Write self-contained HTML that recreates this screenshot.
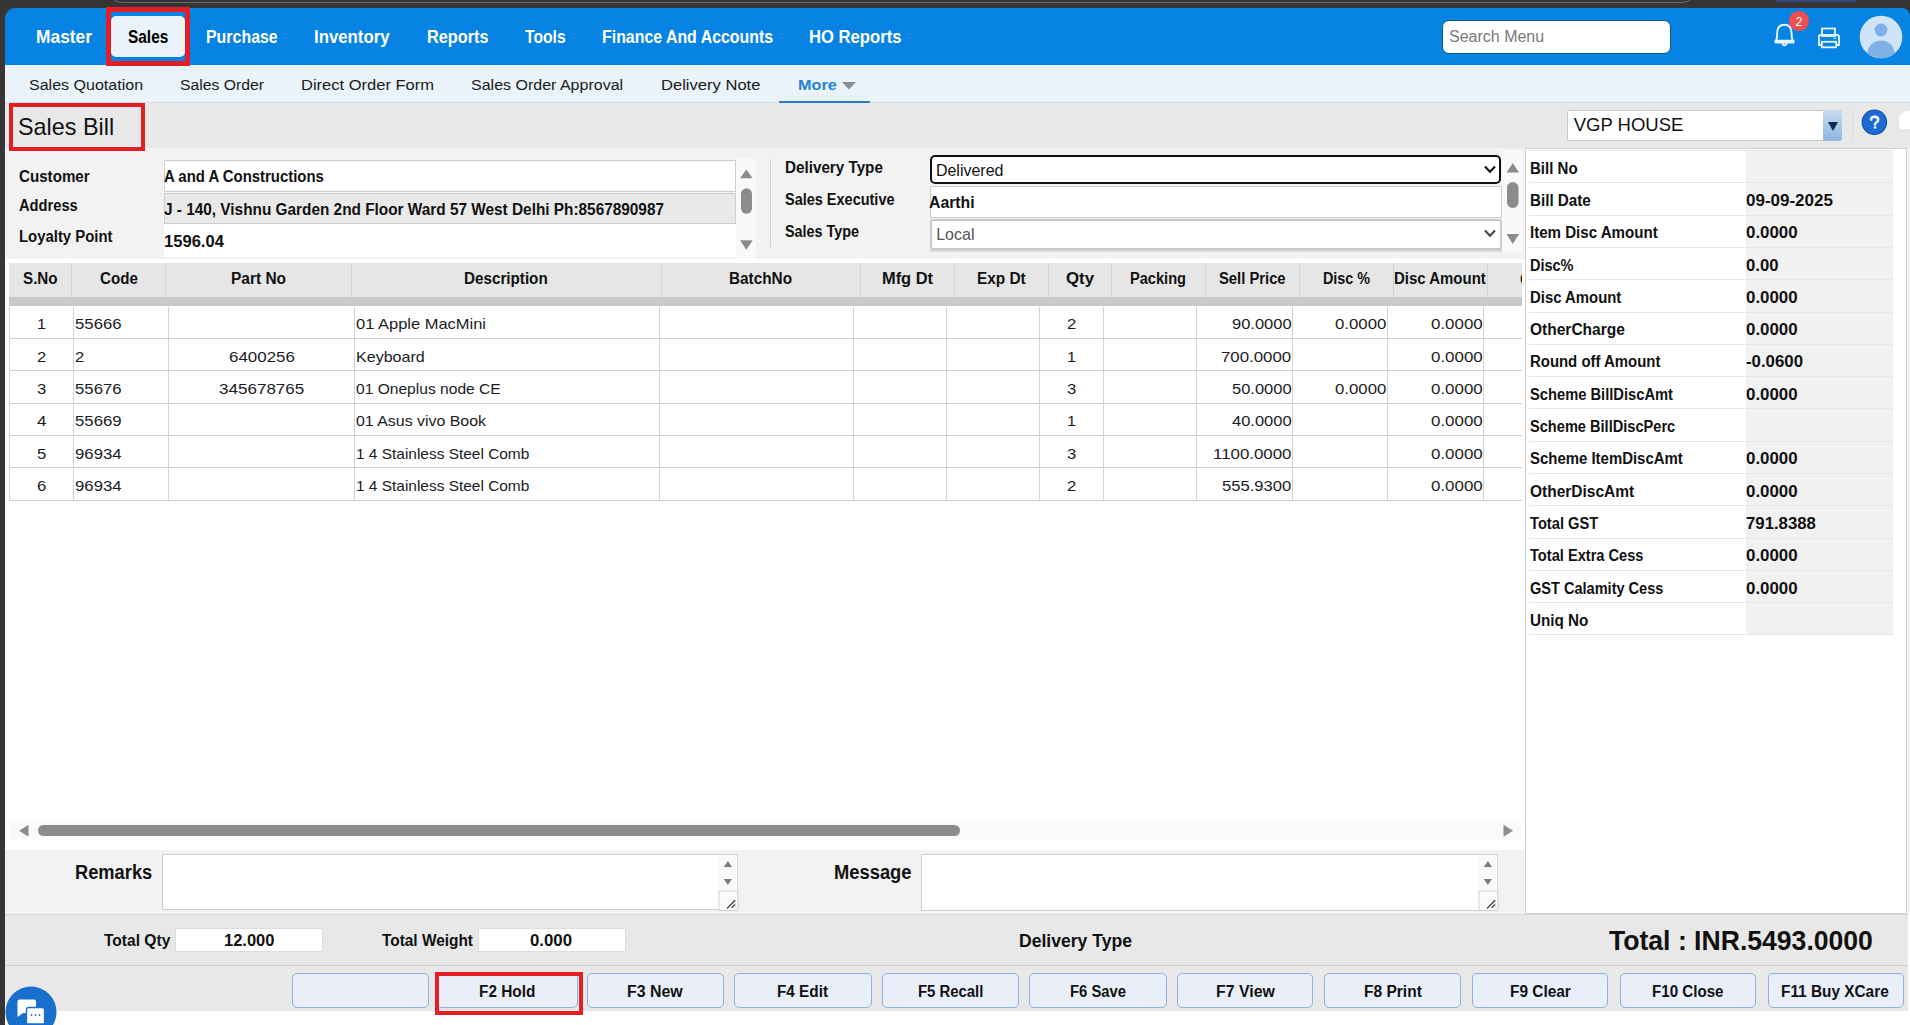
<!DOCTYPE html>
<html><head><meta charset="utf-8">
<style>
*{box-sizing:border-box;margin:0;padding:0}
html,body{width:1910px;height:1025px;overflow:hidden;background:#fff;font-family:"Liberation Sans",sans-serif;color:#111;position:relative}
.b{position:absolute}
.t{position:absolute;white-space:nowrap}
svg{position:absolute;overflow:visible}
</style></head><body>
<div class="b" style="left:0;top:0;width:1910px;height:24px;background:#353535"></div>
<div class="b" style="left:0;top:0;width:5px;height:1025px;background:#353535"></div>
<div class="b" style="left:108px;top:-33px;width:1588px;height:36px;border:1.5px solid #6a6a6a;border-radius:14px;background:#353535"></div>
<div class="b" style="left:1776px;top:0;width:80px;height:1.5px;background:#34497a;border-radius:0 0 2px 2px"></div>
<div class="b" style="left:5px;top:8px;width:1905px;height:57px;background:#0784e3;border-top-left-radius:10px;border-top-right-radius:8px"></div>
<div class="b" style="left:111px;top:16px;width:74px;height:41px;background:#eaf2fb;border-radius:5px"></div>
<div class="b" style="left:106px;top:6.5px;width:84px;height:59.5px;border:5px solid #e41e26;z-index:3"></div>
<div class="b" style="left:1441.5px;top:19.5px;width:229px;height:34px;background:#fff;border:1px solid #0b5a80;border-radius:7px"></div>
<div class="b" style="left:5px;top:65px;width:1905px;height:38px;background:#eaf2fa;border-bottom:1.5px solid #d3dbe3"></div>
<div class="b" style="left:779px;top:100.5px;width:91px;height:2.5px;background:#2a7bc8"></div>
<div class="b" style="left:5px;top:103px;width:1905px;height:45px;background:#e8e8e8"></div>
<div class="b" style="left:9px;top:103px;width:136px;height:48px;border:4.5px solid #e41e26;z-index:6"></div>
<div class="b" style="left:1566.5px;top:109.5px;width:275px;height:31.5px;background:#fff;border:1px solid #c8c8c8;border-radius:2px"></div>
<div class="b" style="left:1822.5px;top:109.5px;width:19px;height:31.5px;background:linear-gradient(#c9ddf0,#8db7dd);border-radius:0 3px 3px 0"></div>
<div class="b" style="left:1852px;top:110px;width:1px;height:30px;background:#dadada"></div>
<div class="b" style="left:1899px;top:111px;width:11px;height:18px;background:#fff;border-radius:9px 0 0 4px"></div>
<div class="b" style="left:5px;top:148px;width:1905px;height:765px;background:#f2f2f2"></div>
<div class="b" style="left:5px;top:148px;width:1517px;height:111px;background:#f2f2f2"></div>
<div class="b" style="left:164px;top:160px;width:572px;height:32px;background:#fff;border:1px solid #cdcdcd"></div>
<div class="b" style="left:164px;top:193px;width:572px;height:31px;background:#e9e9e9;border:1px solid #cdcdcd"></div>
<div class="b" style="left:164px;top:224px;width:572px;height:32.5px;background:#fff"></div>
<div class="b" style="left:736px;top:158.5px;width:20px;height:100px;background:#f9f9f9"></div>
<div class="b" style="left:769.5px;top:158.5px;width:1px;height:88px;background:#cfcfcf"></div>
<div class="b" style="left:929.5px;top:154.5px;width:571.5px;height:29.5px;background:#fff;border:2.6px solid #111;border-radius:5px"></div>
<div class="b" style="left:929.5px;top:186px;width:572px;height:31.5px;background:#fff;border:1.5px solid #cacaca"></div>
<div class="b" style="left:929.5px;top:219px;width:572px;height:30.5px;background:#fff;border:2px solid #cacaca;border-radius:2px"></div>
<div class="b" style="left:929.5px;top:250px;width:572px;height:2px;background:#d9d9d9"></div>
<div class="b" style="left:1502px;top:150px;width:20px;height:102px;background:#f9f9f9"></div>
<div class="b" style="left:5px;top:259px;width:1520px;height:591px;background:#fff"></div>
<div class="b" style="left:1525px;top:147.5px;width:382px;height:766px;background:#fff;border:1px solid #cfcfcf"></div>
<div class="b" style="left:1746px;top:150px;width:147px;height:485px;background:#f1f1f1"></div>
<div class="b" style="left:5px;top:851px;width:1520px;height:63px;background:#f2f2f2"></div>
<div class="b" style="left:162px;top:854.3px;width:576px;height:56px;background:#fff;border:1px solid #cfcfcf"></div>
<div class="b" style="left:921px;top:853.8px;width:576.5px;height:57px;background:#fff;border:1px solid #cfcfcf"></div>
<div class="b" style="left:5px;top:913.5px;width:1903px;height:52px;background:#e8e8e8;border-top:1px solid #d8d8d8"></div>
<div class="b" style="left:174.5px;top:927.5px;width:148px;height:24px;background:#fff;border:1px solid #dcdcdc"></div>
<div class="b" style="left:477.7px;top:927.5px;width:148px;height:24px;background:#fff;border:1px solid #dcdcdc"></div>
<div class="b" style="left:5px;top:965px;width:1903px;height:1px;background:#d0d0d0"></div>
<div class="b" style="left:5px;top:966px;width:1903px;height:44.6px;background:#e8e8e8"></div>
<div class="b" style="left:292.3px;top:973.2px;width:136.3px;height:34.4px;background:#e9eef8;border:1px solid #8db3e2;border-radius:5px"></div>
<div class="b" style="left:437px;top:973.2px;width:140.5px;height:34.4px;background:#e9eef8;border:1px solid #8db3e2;border-radius:5px"></div>
<div class="b" style="left:587.1px;top:973.2px;width:136.6px;height:34.4px;background:#e9eef8;border:1px solid #8db3e2;border-radius:5px"></div>
<div class="b" style="left:734.3px;top:973.2px;width:137.4px;height:34.4px;background:#e9eef8;border:1px solid #8db3e2;border-radius:5px"></div>
<div class="b" style="left:882.3px;top:973.2px;width:136.4px;height:34.4px;background:#e9eef8;border:1px solid #8db3e2;border-radius:5px"></div>
<div class="b" style="left:1029.4px;top:973.2px;width:137.2px;height:34.4px;background:#e9eef8;border:1px solid #8db3e2;border-radius:5px"></div>
<div class="b" style="left:1177.4px;top:973.2px;width:136.0px;height:34.4px;background:#e9eef8;border:1px solid #8db3e2;border-radius:5px"></div>
<div class="b" style="left:1324.4px;top:973.2px;width:136.9px;height:34.4px;background:#e9eef8;border:1px solid #8db3e2;border-radius:5px"></div>
<div class="b" style="left:1472.3px;top:973.2px;width:136.1px;height:34.4px;background:#e9eef8;border:1px solid #8db3e2;border-radius:5px"></div>
<div class="b" style="left:1619.5px;top:973.2px;width:136.9px;height:34.4px;background:#e9eef8;border:1px solid #8db3e2;border-radius:5px"></div>
<div class="b" style="left:1767.5px;top:973.2px;width:136.2px;height:34.4px;background:#e9eef8;border:1px solid #8db3e2;border-radius:5px"></div>
<div class="b" style="left:435.1px;top:972px;width:147.8px;height:42.6px;border:4.5px solid #e41e26;z-index:6"></div>
<div class="b" style="left:9.4px;top:262.8px;width:1512.6px;height:34px;background:#e6e6e6"></div>
<div class="b" style="left:71.1px;top:262.8px;width:1px;height:34px;background:#d2d2d2"></div>
<div class="b" style="left:164.7px;top:262.8px;width:1px;height:34px;background:#d2d2d2"></div>
<div class="b" style="left:350.8px;top:262.8px;width:1px;height:34px;background:#d2d2d2"></div>
<div class="b" style="left:660.8px;top:262.8px;width:1px;height:34px;background:#d2d2d2"></div>
<div class="b" style="left:859.8px;top:262.8px;width:1px;height:34px;background:#d2d2d2"></div>
<div class="b" style="left:953.8px;top:262.8px;width:1px;height:34px;background:#d2d2d2"></div>
<div class="b" style="left:1048.1px;top:262.8px;width:1px;height:34px;background:#d2d2d2"></div>
<div class="b" style="left:1110.7px;top:262.8px;width:1px;height:34px;background:#d2d2d2"></div>
<div class="b" style="left:1204.8px;top:262.8px;width:1px;height:34px;background:#d2d2d2"></div>
<div class="b" style="left:1298.8px;top:262.8px;width:1px;height:34px;background:#d2d2d2"></div>
<div class="b" style="left:1393.1px;top:262.8px;width:1px;height:34px;background:#d2d2d2"></div>
<div class="b" style="left:1487.1px;top:262.8px;width:1px;height:34px;background:#d2d2d2"></div>
<div class="b" style="left:9.4px;top:296.8px;width:1512.6px;height:9.7px;background:#c9c9c9"></div>
<div class="b" style="left:9.4px;top:338px;width:1512.6px;height:1.3px;background:#d0d0d0"></div>
<div class="b" style="left:9.4px;top:370px;width:1512.6px;height:1.3px;background:#d0d0d0"></div>
<div class="b" style="left:9.4px;top:403px;width:1512.6px;height:1.3px;background:#d0d0d0"></div>
<div class="b" style="left:9.4px;top:435px;width:1512.6px;height:1.3px;background:#d0d0d0"></div>
<div class="b" style="left:9.4px;top:467px;width:1512.6px;height:1.3px;background:#d0d0d0"></div>
<div class="b" style="left:9.4px;top:500px;width:1512.6px;height:1.3px;background:#d0d0d0"></div>
<div class="b" style="left:8.9px;top:306.5px;width:1.2px;height:194.6px;background:#d3d3d3"></div>
<div class="b" style="left:73.0px;top:306.5px;width:1.2px;height:194.6px;background:#d3d3d3"></div>
<div class="b" style="left:167.8px;top:306.5px;width:1.2px;height:194.6px;background:#d3d3d3"></div>
<div class="b" style="left:354.1px;top:306.5px;width:1.2px;height:194.6px;background:#d3d3d3"></div>
<div class="b" style="left:658.8px;top:306.5px;width:1.2px;height:194.6px;background:#d3d3d3"></div>
<div class="b" style="left:853.1px;top:306.5px;width:1.2px;height:194.6px;background:#d3d3d3"></div>
<div class="b" style="left:946.0px;top:306.5px;width:1.2px;height:194.6px;background:#d3d3d3"></div>
<div class="b" style="left:1039.0px;top:306.5px;width:1.2px;height:194.6px;background:#d3d3d3"></div>
<div class="b" style="left:1103.0px;top:306.5px;width:1.2px;height:194.6px;background:#d3d3d3"></div>
<div class="b" style="left:1196.0px;top:306.5px;width:1.2px;height:194.6px;background:#d3d3d3"></div>
<div class="b" style="left:1292.0px;top:306.5px;width:1.2px;height:194.6px;background:#d3d3d3"></div>
<div class="b" style="left:1386.9px;top:306.5px;width:1.2px;height:194.6px;background:#d3d3d3"></div>
<div class="b" style="left:1483.0px;top:306.5px;width:1.2px;height:194.6px;background:#d3d3d3"></div>
<div class="b" style="left:1529.3px;top:150px;width:363.5px;height:1.3px;background:#e6e6e6"></div>
<div class="b" style="left:1529.3px;top:182px;width:363.5px;height:1.3px;background:#e6e6e6"></div>
<div class="b" style="left:1529.3px;top:215px;width:363.5px;height:1.3px;background:#e6e6e6"></div>
<div class="b" style="left:1529.3px;top:247px;width:363.5px;height:1.3px;background:#e6e6e6"></div>
<div class="b" style="left:1529.3px;top:279px;width:363.5px;height:1.3px;background:#e6e6e6"></div>
<div class="b" style="left:1529.3px;top:312px;width:363.5px;height:1.3px;background:#e6e6e6"></div>
<div class="b" style="left:1529.3px;top:344px;width:363.5px;height:1.3px;background:#e6e6e6"></div>
<div class="b" style="left:1529.3px;top:376px;width:363.5px;height:1.3px;background:#e6e6e6"></div>
<div class="b" style="left:1529.3px;top:408px;width:363.5px;height:1.3px;background:#e6e6e6"></div>
<div class="b" style="left:1529.3px;top:441px;width:363.5px;height:1.3px;background:#e6e6e6"></div>
<div class="b" style="left:1529.3px;top:473px;width:363.5px;height:1.3px;background:#e6e6e6"></div>
<div class="b" style="left:1529.3px;top:505px;width:363.5px;height:1.3px;background:#e6e6e6"></div>
<div class="b" style="left:1529.3px;top:538px;width:363.5px;height:1.3px;background:#e6e6e6"></div>
<div class="b" style="left:1529.3px;top:570px;width:363.5px;height:1.3px;background:#e6e6e6"></div>
<div class="b" style="left:1529.3px;top:602px;width:363.5px;height:1.3px;background:#e6e6e6"></div>
<div class="b" style="left:1529.3px;top:634px;width:363.5px;height:1.3px;background:#e6e6e6"></div>

<div class="b" style="left:1519.5px;top:271.5px;width:2.5px;height:16px;overflow:hidden"><div style="position:absolute;left:0.5px;top:0px;font-size:16px;line-height:16px;font-weight:bold;color:#111;font-family:'Liberation Sans'">C</div></div>
<!-- bell -->
<svg style="left:1770px;top:20px" width="30" height="30" viewBox="0 0 30 30">
<path d="M6.2 20.3 C7 18.8 7.2 17 7.2 13.5 C7.2 7.5 9.8 4.8 14.4 4.8 C19 4.8 21.6 7.5 21.6 13.5 C21.6 17 21.8 18.8 22.6 20.3" fill="none" stroke="#e8f6ff" stroke-width="1.9" stroke-linejoin="round"/>
<path d="M5.5 20.8 Q4.5 22.6 6.2 22.6 L22.6 22.6 Q24.3 22.6 23.3 20.8 Z" fill="none" stroke="#e8f6ff" stroke-width="1.9" stroke-linejoin="round"/>
<path d="M12.3 23.2 A2.2 2.6 0 0 0 16.6 23.2" fill="none" stroke="#e8f6ff" stroke-width="1.9"/>
</svg>
<div class="b" style="left:1789.2px;top:11px;width:19.6px;height:19.6px;border-radius:50%;background:#ef4e4e"></div>
<div class="t" style="left:1795.4px;top:14.6px;font-size:12.5px;line-height:14px;color:#fff">2</div>
<!-- printer -->
<svg style="left:1816px;top:26px" width="26" height="24" viewBox="0 0 26 24">
<rect x="6" y="2.5" width="13" height="7.5" fill="none" stroke="#e8f6ff" stroke-width="1.8"/>
<path d="M5.5 19 L3 19 L3 10.5 Q3 8.8 4.8 8.8 L21.2 8.8 Q23 8.8 23 10.5 L23 19 L20.5 19" fill="none" stroke="#e8f6ff" stroke-width="1.8"/>
<rect x="5.8" y="15.8" width="14.4" height="5.5" fill="none" stroke="#e8f6ff" stroke-width="1.8"/>
<rect x="17.5" y="11.5" width="3" height="1.2" fill="#cfe8ff"/>
</svg>
<!-- avatar -->
<svg style="left:1859px;top:15px" width="44" height="44" viewBox="0 0 44 44">
<defs><clipPath id="av"><circle cx="22" cy="22" r="21.3"/></clipPath></defs>
<circle cx="22" cy="22" r="21.3" fill="#cfe4f8"/>
<g clip-path="url(#av)"><circle cx="22" cy="15" r="6.5" fill="#7fb1e6"/><ellipse cx="22" cy="38.5" rx="13.5" ry="13" fill="#7fb1e6"/></g>
</svg>
<!-- more triangle -->
<svg style="left:842px;top:82px" width="14" height="8" viewBox="0 0 14 8"><path d="M0 0 L14 0 L7 7.5 Z" fill="#8a8f96"/></svg>
<!-- VGP triangle -->
<svg style="left:1828px;top:121.5px" width="10" height="9" viewBox="0 0 10 9"><path d="M0 0 L10 0 L5 9 Z" fill="#0f2b55"/></svg>
<!-- help -->
<svg style="left:1861px;top:108.5px" width="27" height="27" viewBox="0 0 27 27">
<circle cx="13.4" cy="13.2" r="12.2" fill="#1d6ad6" stroke="#10509f" stroke-width="1.1"/>
<path d="M10.1 10.6 Q10.2 7.8 13.6 7.8 Q17.2 7.8 17.2 10.7 Q17.2 12.4 15.3 13.5 Q14 14.2 14 15.6" fill="none" stroke="#f4f9ff" stroke-width="2.5" stroke-linecap="round"/>
<circle cx="14" cy="18.5" r="1.35" fill="#f4f9ff"/>
</svg>
<!-- form scrollbar left -->
<svg style="left:736px;top:158px" width="20" height="100" viewBox="0 0 20 100">
<path d="M4 20.3 L10.3 11.5 L16.7 20.3 Z" fill="#8c8c8c"/>
<rect x="5" y="30.3" width="11" height="25.5" rx="5.5" fill="#8c8c8c"/>
<path d="M4 82.3 L16.7 82.3 L10.3 91.8 Z" fill="#8c8c8c"/>
</svg>
<!-- form scrollbar right -->
<svg style="left:1502px;top:150px" width="20" height="102" viewBox="0 0 20 102">
<path d="M4.5 22.6 L10.8 13 L17 22.6 Z" fill="#8c8c8c"/>
<rect x="5" y="32" width="11.5" height="26" rx="5.7" fill="#8c8c8c"/>
<path d="M4.5 84 L17 84 L10.8 94 Z" fill="#8c8c8c"/>
</svg>
<!-- select chevrons -->
<svg style="left:1484px;top:165px" width="12" height="9" viewBox="0 0 12 9"><path d="M1 1.5 L6 6.8 L11 1.5" fill="none" stroke="#111" stroke-width="2"/></svg>
<svg style="left:1484px;top:229px" width="12" height="9" viewBox="0 0 12 9"><path d="M1 1.5 L6 6.8 L11 1.5" fill="none" stroke="#444" stroke-width="2"/></svg>
<!-- horizontal scrollbar -->
<div class="b" style="left:9.5px;top:821px;width:1512px;height:19px;background:#fafafa"></div>
<svg style="left:18px;top:824px" width="12" height="14" viewBox="0 0 12 14"><path d="M10.5 0.7 L1 6.8 L10.5 12.8 Z" fill="#8c8c8c"/></svg>
<div class="b" style="left:38px;top:825px;width:922px;height:11px;border-radius:5.5px;background:#8c8c8c"></div>
<svg style="left:1502px;top:824px" width="12" height="14" viewBox="0 0 12 14"><path d="M1.5 0.7 L11 6.8 L1.5 12.8 Z" fill="#8c8c8c"/></svg>
<!-- textarea arrows -->
<svg style="left:717.6px;top:840px" width="20" height="72" viewBox="0 0 20 72">
<rect x="0" y="15.3" width="19.3" height="36" fill="#f9f9f9"/>
<path d="M5.8 27 L9.9 21 L14 27 Z" fill="#7c7c7c"/><path d="M5.8 39 L14 39 L9.9 45 Z" fill="#7c7c7c"/>
<rect x="0.9" y="51" width="19" height="19.5" fill="#fafafa" stroke="#d2d2d2" stroke-width="1"/>
<path d="M9.4 68 L16.8 60.5 M13.9 67.3 L16.8 64.8" stroke="#444" stroke-width="1.3" stroke-linecap="round"/>
</svg>
<svg style="left:1477.6px;top:840px" width="20" height="72" viewBox="0 0 20 72">
<rect x="0" y="15.3" width="19.3" height="36" fill="#f9f9f9"/>
<path d="M5.8 27 L9.9 21 L14 27 Z" fill="#7c7c7c"/><path d="M5.8 39 L14 39 L9.9 45 Z" fill="#7c7c7c"/>
<rect x="0.9" y="51" width="19" height="19.5" fill="#fafafa" stroke="#d2d2d2" stroke-width="1"/>
<path d="M9.4 68 L16.8 60.5 M13.9 67.3 L16.8 64.8" stroke="#444" stroke-width="1.3" stroke-linecap="round"/>
</svg>
<!-- chat bubble -->
<svg style="left:4px;top:983.5px" width="56" height="42" viewBox="0 0 56 42">
<circle cx="27" cy="28" r="25.5" fill="#1a6fce"/>
<path d="M13.5 17.5 Q13.5 15.5 15.5 15.5 L30 15.5 Q32 15.5 32 17.5 L32 27 Q32 29 30 29 L19 29 L13.5 33 Z" fill="#fff"/>
<path d="M22.5 25.5 Q22.5 23.5 24.5 23.5 L38 23.5 Q40.5 23.5 40.5 25.5 L40.5 40 L22.5 40 Z" fill="#fff" stroke="#1a6fce" stroke-width="1.3"/>
<circle cx="27.5" cy="31" r="0.9" fill="#1a6fce"/><circle cx="31.5" cy="31" r="0.9" fill="#1a6fce"/><circle cx="35.5" cy="31" r="0.9" fill="#1a6fce"/>
</svg>

<div class="t" id="t0" style="top:28.44px;font-size:18.5px;line-height:18.5px;font-weight:bold;color:#fff;font-family:'Liberation Sans',sans-serif;z-index:5;transform:scaleX(0.9390);transform-origin:0 0;left:36.05px">Master</div>
<div class="t" id="t1" style="top:28.44px;font-size:18.5px;line-height:18.5px;font-weight:bold;color:#fff;font-family:'Liberation Sans',sans-serif;z-index:5;transform:scaleX(0.8608);transform-origin:0 0;left:205.61px">Purchase</div>
<div class="t" id="t2" style="top:28.44px;font-size:18.5px;line-height:18.5px;font-weight:bold;color:#fff;font-family:'Liberation Sans',sans-serif;z-index:5;transform:scaleX(0.9078);transform-origin:0 0;left:314.47px">Inventory</div>
<div class="t" id="t3" style="top:28.44px;font-size:18.5px;line-height:18.5px;font-weight:bold;color:#fff;font-family:'Liberation Sans',sans-serif;z-index:5;transform:scaleX(0.8797);transform-origin:0 0;left:426.70px">Reports</div>
<div class="t" id="t4" style="top:28.44px;font-size:18.5px;line-height:18.5px;font-weight:bold;color:#fff;font-family:'Liberation Sans',sans-serif;z-index:5;transform:scaleX(0.8464);transform-origin:0 0;left:524.82px">Tools</div>
<div class="t" id="t5" style="top:28.44px;font-size:18.5px;line-height:18.5px;font-weight:bold;color:#fff;font-family:'Liberation Sans',sans-serif;z-index:5;transform:scaleX(0.8595);transform-origin:0 0;left:601.61px">Finance And Accounts</div>
<div class="t" id="t6" style="top:28.44px;font-size:18.5px;line-height:18.5px;font-weight:bold;color:#fff;font-family:'Liberation Sans',sans-serif;z-index:5;transform:scaleX(0.8998);transform-origin:0 0;left:809.28px">HO Reports</div>
<div class="t" id="t7" style="top:28.44px;font-size:18.5px;line-height:18.5px;font-weight:bold;color:#000;font-family:'Liberation Sans',sans-serif;z-index:7;transform:scaleX(0.8333);transform-origin:0 0;left:128.33px">Sales</div>
<div class="t" id="t8" style="top:29.26px;font-size:16px;line-height:16px;font-weight:normal;color:#7a7a7a;font-family:'Liberation Sans',sans-serif;z-index:5;left:1449.00px">Search Menu</div>
<div class="t" id="t9" style="top:77.28px;font-size:15.5px;line-height:15.5px;font-weight:normal;color:#1a1a1a;font-family:'Liberation Sans',sans-serif;z-index:5;transform:scaleX(1.0345);transform-origin:0 0;left:28.97px">Sales Quotation</div>
<div class="t" id="t10" style="top:77.28px;font-size:15.5px;line-height:15.5px;font-weight:normal;color:#1a1a1a;font-family:'Liberation Sans',sans-serif;z-index:5;transform:scaleX(1.0145);transform-origin:0 0;left:180.19px">Sales Order</div>
<div class="t" id="t11" style="top:77.28px;font-size:15.5px;line-height:15.5px;font-weight:normal;color:#1a1a1a;font-family:'Liberation Sans',sans-serif;z-index:5;transform:scaleX(1.0651);transform-origin:0 0;left:301.15px">Direct Order Form</div>
<div class="t" id="t12" style="top:77.28px;font-size:15.5px;line-height:15.5px;font-weight:normal;color:#1a1a1a;font-family:'Liberation Sans',sans-serif;z-index:5;transform:scaleX(1.0324);transform-origin:0 0;left:470.97px">Sales Order Approval</div>
<div class="t" id="t13" style="top:77.28px;font-size:15.5px;line-height:15.5px;font-weight:normal;color:#1a1a1a;font-family:'Liberation Sans',sans-serif;z-index:5;transform:scaleX(1.0685);transform-origin:0 0;left:660.75px">Delivery Note</div>
<div class="t" id="t14" style="top:77.28px;font-size:15.5px;line-height:15.5px;font-weight:bold;color:#1f86d6;font-family:'Liberation Sans',sans-serif;z-index:5;transform:scaleX(1.0446);transform-origin:0 0;left:798.16px">More</div>
<div class="t" id="t15" style="top:114.78px;font-size:24px;line-height:24px;font-weight:normal;color:#111;font-family:'Liberation Sans',sans-serif;z-index:7;transform:scaleX(0.9735);transform-origin:0 0;left:18.02px">Sales Bill</div>
<div class="t" id="t16" style="top:115.64px;font-size:18.5px;line-height:18.5px;font-weight:normal;color:#111;font-family:'Liberation Sans',sans-serif;z-index:5;left:1573.70px">VGP HOUSE</div>
<div class="t" id="t17" style="top:168.76px;font-size:16px;line-height:16px;font-weight:bold;color:#111;font-family:'Liberation Sans',sans-serif;z-index:5;transform:scaleX(0.9466);transform-origin:0 0;left:19.04px">Customer</div>
<div class="t" id="t18" style="top:197.66px;font-size:16px;line-height:16px;font-weight:bold;color:#111;font-family:'Liberation Sans',sans-serif;z-index:5;transform:scaleX(0.9183);transform-origin:0 0;left:19.07px">Address</div>
<div class="t" id="t19" style="top:229.46px;font-size:16px;line-height:16px;font-weight:bold;color:#111;font-family:'Liberation Sans',sans-serif;z-index:5;transform:scaleX(0.9308);transform-origin:0 0;left:19.06px">Loyalty Point</div>
<div class="t" id="t20" style="top:169.16px;font-size:16px;line-height:16px;font-weight:bold;color:#111;font-family:'Liberation Sans',sans-serif;z-index:5;transform:scaleX(0.9314);transform-origin:0 0;left:163.75px">A and A Constructions</div>
<div class="t" id="t21" style="top:201.96px;font-size:16px;line-height:16px;font-weight:bold;color:#111;font-family:'Liberation Sans',sans-serif;z-index:5;transform:scaleX(0.9601);transform-origin:0 0;left:163.73px">J - 140, Vishnu Garden 2nd Floor Ward 57 West Delhi Ph:8567890987</div>
<div class="t" id="t22" style="top:233.86px;font-size:16px;line-height:16px;font-weight:bold;color:#111;font-family:'Liberation Sans',sans-serif;z-index:5;transform:scaleX(1.0355);transform-origin:0 0;left:163.67px">1596.04</div>
<div class="t" id="t23" style="top:160.16px;font-size:16px;line-height:16px;font-weight:bold;color:#111;font-family:'Liberation Sans',sans-serif;z-index:5;transform:scaleX(0.9516);transform-origin:0 0;left:784.74px">Delivery Type</div>
<div class="t" id="t24" style="top:191.86px;font-size:16px;line-height:16px;font-weight:bold;color:#111;font-family:'Liberation Sans',sans-serif;z-index:5;transform:scaleX(0.9052);transform-origin:0 0;left:784.78px">Sales Executive</div>
<div class="t" id="t25" style="top:223.86px;font-size:16px;line-height:16px;font-weight:bold;color:#111;font-family:'Liberation Sans',sans-serif;z-index:5;transform:scaleX(0.8990);transform-origin:0 0;left:784.78px">Sales Type</div>
<div class="t" id="t26" style="top:162.56px;font-size:16px;line-height:16px;font-weight:normal;color:#111;font-family:'Liberation Sans',sans-serif;z-index:5;left:935.90px">Delivered</div>
<div class="t" id="t27" style="top:194.86px;font-size:16px;line-height:16px;font-weight:bold;color:#111;font-family:'Liberation Sans',sans-serif;z-index:5;transform:scaleX(0.9863);transform-origin:0 0;left:929.41px">Aarthi</div>
<div class="t" id="t28" style="top:226.66px;font-size:16px;line-height:16px;font-weight:normal;color:#555;font-family:'Liberation Sans',sans-serif;z-index:5;left:936.20px">Local</div>
<div class="t" id="t29" style="top:160.66px;font-size:16px;line-height:16px;font-weight:bold;color:#111;font-family:'Liberation Sans',sans-serif;z-index:5;transform:scaleX(0.9394);transform-origin:0 0;left:1530.45px">Bill No</div>
<div class="t" id="t30" style="top:192.96px;font-size:16px;line-height:16px;font-weight:bold;color:#111;font-family:'Liberation Sans',sans-serif;z-index:5;transform:scaleX(0.9498);transform-origin:0 0;left:1530.44px">Bill Date</div>
<div class="t" id="t31" style="top:192.96px;font-size:16px;line-height:16px;font-weight:bold;color:#111;font-family:'Liberation Sans',sans-serif;z-index:5;transform:scaleX(1.0618);transform-origin:0 0;left:1745.75px">09-09-2025</div>
<div class="t" id="t32" style="top:225.26px;font-size:16px;line-height:16px;font-weight:bold;color:#111;font-family:'Liberation Sans',sans-serif;z-index:5;transform:scaleX(0.9430);transform-origin:0 0;left:1530.45px">Item Disc Amount</div>
<div class="t" id="t33" style="top:225.26px;font-size:16px;line-height:16px;font-weight:bold;color:#111;font-family:'Liberation Sans',sans-serif;z-index:5;transform:scaleX(1.0544);transform-origin:0 0;left:1745.76px">0.0000</div>
<div class="t" id="t34" style="top:257.56px;font-size:16px;line-height:16px;font-weight:bold;color:#111;font-family:'Liberation Sans',sans-serif;z-index:5;transform:scaleX(0.9057);transform-origin:0 0;left:1530.48px">Disc%</div>
<div class="t" id="t35" style="top:257.56px;font-size:16px;line-height:16px;font-weight:bold;color:#111;font-family:'Liberation Sans',sans-serif;z-index:5;transform:scaleX(1.0404);transform-origin:0 0;left:1745.77px">0.00</div>
<div class="t" id="t36" style="top:289.86px;font-size:16px;line-height:16px;font-weight:bold;color:#111;font-family:'Liberation Sans',sans-serif;z-index:5;transform:scaleX(0.9309);transform-origin:0 0;left:1530.46px">Disc Amount</div>
<div class="t" id="t37" style="top:289.86px;font-size:16px;line-height:16px;font-weight:bold;color:#111;font-family:'Liberation Sans',sans-serif;z-index:5;transform:scaleX(1.0544);transform-origin:0 0;left:1745.76px">0.0000</div>
<div class="t" id="t38" style="top:322.16px;font-size:16px;line-height:16px;font-weight:bold;color:#111;font-family:'Liberation Sans',sans-serif;z-index:5;transform:scaleX(0.9704);transform-origin:0 0;left:1530.42px">OtherCharge</div>
<div class="t" id="t39" style="top:322.16px;font-size:16px;line-height:16px;font-weight:bold;color:#111;font-family:'Liberation Sans',sans-serif;z-index:5;transform:scaleX(1.0544);transform-origin:0 0;left:1745.76px">0.0000</div>
<div class="t" id="t40" style="top:354.46px;font-size:16px;line-height:16px;font-weight:bold;color:#111;font-family:'Liberation Sans',sans-serif;z-index:5;transform:scaleX(0.9327);transform-origin:0 0;left:1530.45px">Round off Amount</div>
<div class="t" id="t41" style="top:354.46px;font-size:16px;line-height:16px;font-weight:bold;color:#111;font-family:'Liberation Sans',sans-serif;z-index:5;transform:scaleX(1.0504);transform-origin:0 0;left:1745.76px">-0.0600</div>
<div class="t" id="t42" style="top:386.76px;font-size:16px;line-height:16px;font-weight:bold;color:#111;font-family:'Liberation Sans',sans-serif;z-index:5;transform:scaleX(0.9190);transform-origin:0 0;left:1530.46px">Scheme BillDiscAmt</div>
<div class="t" id="t43" style="top:386.76px;font-size:16px;line-height:16px;font-weight:bold;color:#111;font-family:'Liberation Sans',sans-serif;z-index:5;transform:scaleX(1.0544);transform-origin:0 0;left:1745.76px">0.0000</div>
<div class="t" id="t44" style="top:419.06px;font-size:16px;line-height:16px;font-weight:bold;color:#111;font-family:'Liberation Sans',sans-serif;z-index:5;transform:scaleX(0.9120);transform-origin:0 0;left:1530.47px">Scheme BillDiscPerc</div>
<div class="t" id="t45" style="top:451.36px;font-size:16px;line-height:16px;font-weight:bold;color:#111;font-family:'Liberation Sans',sans-serif;z-index:5;transform:scaleX(0.9338);transform-origin:0 0;left:1530.45px">Scheme ItemDiscAmt</div>
<div class="t" id="t46" style="top:451.36px;font-size:16px;line-height:16px;font-weight:bold;color:#111;font-family:'Liberation Sans',sans-serif;z-index:5;transform:scaleX(1.0544);transform-origin:0 0;left:1745.76px">0.0000</div>
<div class="t" id="t47" style="top:483.66px;font-size:16px;line-height:16px;font-weight:bold;color:#111;font-family:'Liberation Sans',sans-serif;z-index:5;transform:scaleX(0.9686);transform-origin:0 0;left:1530.43px">OtherDiscAmt</div>
<div class="t" id="t48" style="top:483.66px;font-size:16px;line-height:16px;font-weight:bold;color:#111;font-family:'Liberation Sans',sans-serif;z-index:5;transform:scaleX(1.0544);transform-origin:0 0;left:1745.76px">0.0000</div>
<div class="t" id="t49" style="top:515.96px;font-size:16px;line-height:16px;font-weight:bold;color:#111;font-family:'Liberation Sans',sans-serif;z-index:5;transform:scaleX(0.9183);transform-origin:0 0;left:1530.47px">Total GST</div>
<div class="t" id="t50" style="top:515.96px;font-size:16px;line-height:16px;font-weight:bold;color:#111;font-family:'Liberation Sans',sans-serif;z-index:5;transform:scaleX(1.0474);transform-origin:0 0;left:1745.76px">791.8388</div>
<div class="t" id="t51" style="top:548.26px;font-size:16px;line-height:16px;font-weight:bold;color:#111;font-family:'Liberation Sans',sans-serif;z-index:5;transform:scaleX(0.9138);transform-origin:0 0;left:1530.47px">Total Extra Cess</div>
<div class="t" id="t52" style="top:548.26px;font-size:16px;line-height:16px;font-weight:bold;color:#111;font-family:'Liberation Sans',sans-serif;z-index:5;transform:scaleX(1.0544);transform-origin:0 0;left:1745.76px">0.0000</div>
<div class="t" id="t53" style="top:580.56px;font-size:16px;line-height:16px;font-weight:bold;color:#111;font-family:'Liberation Sans',sans-serif;z-index:5;transform:scaleX(0.9091);transform-origin:0 0;left:1530.47px">GST Calamity Cess</div>
<div class="t" id="t54" style="top:580.56px;font-size:16px;line-height:16px;font-weight:bold;color:#111;font-family:'Liberation Sans',sans-serif;z-index:5;transform:scaleX(1.0544);transform-origin:0 0;left:1745.76px">0.0000</div>
<div class="t" id="t55" style="top:612.86px;font-size:16px;line-height:16px;font-weight:bold;color:#111;font-family:'Liberation Sans',sans-serif;z-index:5;transform:scaleX(0.9523);transform-origin:0 0;left:1530.44px">Uniq No</div>
<div class="t" id="t56" style="top:270.86px;font-size:16px;line-height:16px;font-weight:bold;color:#111;font-family:'Liberation Sans',sans-serif;z-index:5;transform:scaleX(0.9492);transform-origin:0 0;left:23.20px">S.No</div>
<div class="t" id="t57" style="top:270.86px;font-size:16px;line-height:16px;font-weight:bold;color:#111;font-family:'Liberation Sans',sans-serif;z-index:5;transform:scaleX(0.9450);transform-origin:0 0;left:99.50px">Code</div>
<div class="t" id="t58" style="top:270.86px;font-size:16px;line-height:16px;font-weight:bold;color:#111;font-family:'Liberation Sans',sans-serif;z-index:5;transform:scaleX(0.9665);transform-origin:0 0;left:230.75px">Part No</div>
<div class="t" id="t59" style="top:270.86px;font-size:16px;line-height:16px;font-weight:bold;color:#111;font-family:'Liberation Sans',sans-serif;z-index:5;transform:scaleX(0.9510);transform-origin:0 0;left:464.45px">Description</div>
<div class="t" id="t60" style="top:270.86px;font-size:16px;line-height:16px;font-weight:bold;color:#111;font-family:'Liberation Sans',sans-serif;z-index:5;transform:scaleX(0.9577);transform-origin:0 0;left:729.30px">BatchNo</div>
<div class="t" id="t61" style="top:270.86px;font-size:16px;line-height:16px;font-weight:bold;color:#111;font-family:'Liberation Sans',sans-serif;z-index:5;transform:scaleX(1.0248);transform-origin:0 0;left:881.80px">Mfg Dt</div>
<div class="t" id="t62" style="top:270.86px;font-size:16px;line-height:16px;font-weight:bold;color:#111;font-family:'Liberation Sans',sans-serif;z-index:5;transform:scaleX(0.9611);transform-origin:0 0;left:977.10px">Exp Dt</div>
<div class="t" id="t63" style="top:270.86px;font-size:16px;line-height:16px;font-weight:bold;color:#111;font-family:'Liberation Sans',sans-serif;z-index:5;transform:scaleX(1.0535);transform-origin:0 0;left:1065.85px">Qty</div>
<div class="t" id="t64" style="top:270.86px;font-size:16px;line-height:16px;font-weight:bold;color:#111;font-family:'Liberation Sans',sans-serif;z-index:5;transform:scaleX(0.9127);transform-origin:0 0;left:1130.25px">Packing</div>
<div class="t" id="t65" style="top:270.86px;font-size:16px;line-height:16px;font-weight:bold;color:#111;font-family:'Liberation Sans',sans-serif;z-index:5;transform:scaleX(0.9244);transform-origin:0 0;left:1219.00px">Sell Price</div>
<div class="t" id="t66" style="top:270.86px;font-size:16px;line-height:16px;font-weight:bold;color:#111;font-family:'Liberation Sans',sans-serif;z-index:5;transform:scaleX(0.8977);transform-origin:0 0;left:1322.90px">Disc %</div>
<div class="t" id="t67" style="top:270.86px;font-size:16px;line-height:16px;font-weight:bold;color:#111;font-family:'Liberation Sans',sans-serif;z-index:5;transform:scaleX(0.9360);transform-origin:0 0;left:1394.40px">Disc Amount</div>
<div class="t" id="t68" style="top:316.40px;font-size:15px;line-height:15px;font-weight:normal;color:#1b1b26;font-family:'Liberation Sans',sans-serif;z-index:5;transform:scaleX(1.0787);transform-origin:0 0;left:37.20px">1</div>
<div class="t" id="t69" style="top:316.40px;font-size:15px;line-height:15px;font-weight:normal;color:#1b1b26;font-family:'Liberation Sans',sans-serif;z-index:5;transform:scaleX(1.1146);transform-origin:0 0;left:1066.95px">2</div>
<div class="t" id="t70" style="top:348.75px;font-size:15px;line-height:15px;font-weight:normal;color:#1b1b26;font-family:'Liberation Sans',sans-serif;z-index:5;transform:scaleX(1.1146);transform-origin:0 0;left:37.05px">2</div>
<div class="t" id="t71" style="top:348.75px;font-size:15px;line-height:15px;font-weight:normal;color:#1b1b26;font-family:'Liberation Sans',sans-serif;z-index:5;transform:scaleX(1.0787);transform-origin:0 0;left:1067.10px">1</div>
<div class="t" id="t72" style="top:381.10px;font-size:15px;line-height:15px;font-weight:normal;color:#1b1b26;font-family:'Liberation Sans',sans-serif;z-index:5;transform:scaleX(1.1146);transform-origin:0 0;left:37.05px">3</div>
<div class="t" id="t73" style="top:381.10px;font-size:15px;line-height:15px;font-weight:normal;color:#1b1b26;font-family:'Liberation Sans',sans-serif;z-index:5;transform:scaleX(1.1146);transform-origin:0 0;left:1066.95px">3</div>
<div class="t" id="t74" style="top:413.45px;font-size:15px;line-height:15px;font-weight:normal;color:#1b1b26;font-family:'Liberation Sans',sans-serif;z-index:5;transform:scaleX(1.1386);transform-origin:0 0;left:36.95px">4</div>
<div class="t" id="t75" style="top:413.45px;font-size:15px;line-height:15px;font-weight:normal;color:#1b1b26;font-family:'Liberation Sans',sans-serif;z-index:5;transform:scaleX(1.0787);transform-origin:0 0;left:1067.10px">1</div>
<div class="t" id="t76" style="top:445.80px;font-size:15px;line-height:15px;font-weight:normal;color:#1b1b26;font-family:'Liberation Sans',sans-serif;z-index:5;transform:scaleX(1.1146);transform-origin:0 0;left:37.05px">5</div>
<div class="t" id="t77" style="top:445.80px;font-size:15px;line-height:15px;font-weight:normal;color:#1b1b26;font-family:'Liberation Sans',sans-serif;z-index:5;transform:scaleX(1.1146);transform-origin:0 0;left:1066.95px">3</div>
<div class="t" id="t78" style="top:478.15px;font-size:15px;line-height:15px;font-weight:normal;color:#1b1b26;font-family:'Liberation Sans',sans-serif;z-index:5;transform:scaleX(1.1146);transform-origin:0 0;left:37.05px">6</div>
<div class="t" id="t79" style="top:478.15px;font-size:15px;line-height:15px;font-weight:normal;color:#1b1b26;font-family:'Liberation Sans',sans-serif;z-index:5;transform:scaleX(1.1146);transform-origin:0 0;left:1066.95px">2</div>
<div class="t" id="t80" style="top:316.40px;font-size:15px;line-height:15px;font-weight:normal;color:#1b1b26;font-family:'Liberation Sans',sans-serif;z-index:5;transform:scaleX(1.1170);transform-origin:0 0;left:75.01px">55666</div>
<div class="t" id="t81" style="top:348.75px;font-size:15px;line-height:15px;font-weight:normal;color:#1b1b26;font-family:'Liberation Sans',sans-serif;z-index:5;transform:scaleX(1.1146);transform-origin:0 0;left:75.01px">2</div>
<div class="t" id="t82" style="top:381.10px;font-size:15px;line-height:15px;font-weight:normal;color:#1b1b26;font-family:'Liberation Sans',sans-serif;z-index:5;transform:scaleX(1.1170);transform-origin:0 0;left:75.01px">55676</div>
<div class="t" id="t83" style="top:413.45px;font-size:15px;line-height:15px;font-weight:normal;color:#1b1b26;font-family:'Liberation Sans',sans-serif;z-index:5;transform:scaleX(1.1170);transform-origin:0 0;left:75.01px">55669</div>
<div class="t" id="t84" style="top:445.80px;font-size:15px;line-height:15px;font-weight:normal;color:#1b1b26;font-family:'Liberation Sans',sans-serif;z-index:5;transform:scaleX(1.1170);transform-origin:0 0;left:75.01px">96934</div>
<div class="t" id="t85" style="top:478.15px;font-size:15px;line-height:15px;font-weight:normal;color:#1b1b26;font-family:'Liberation Sans',sans-serif;z-index:5;transform:scaleX(1.1170);transform-origin:0 0;left:75.01px">96934</div>
<div class="t" id="t86" style="top:348.75px;font-size:15px;line-height:15px;font-weight:normal;color:#1b1b26;font-family:'Liberation Sans',sans-serif;z-index:5;transform:scaleX(1.1283);transform-origin:0 0;left:228.50px">6400256</div>
<div class="t" id="t87" style="top:381.10px;font-size:15px;line-height:15px;font-weight:normal;color:#1b1b26;font-family:'Liberation Sans',sans-serif;z-index:5;transform:scaleX(1.1359);transform-origin:0 0;left:218.60px">345678765</div>
<div class="t" id="t88" style="top:316.40px;font-size:15px;line-height:15px;font-weight:normal;color:#1b1b26;font-family:'Liberation Sans',sans-serif;z-index:5;transform:scaleX(1.0979);transform-origin:0 0;left:355.62px">01 Apple MacMini</div>
<div class="t" id="t89" style="top:348.75px;font-size:15px;line-height:15px;font-weight:normal;color:#1b1b26;font-family:'Liberation Sans',sans-serif;z-index:5;transform:scaleX(1.0698);transform-origin:0 0;left:356.44px">Keyboard</div>
<div class="t" id="t90" style="top:381.10px;font-size:15px;line-height:15px;font-weight:normal;color:#1b1b26;font-family:'Liberation Sans',sans-serif;z-index:5;transform:scaleX(1.0390);transform-origin:0 0;left:355.67px">01 Oneplus node CE</div>
<div class="t" id="t91" style="top:413.45px;font-size:15px;line-height:15px;font-weight:normal;color:#1b1b26;font-family:'Liberation Sans',sans-serif;z-index:5;transform:scaleX(1.0605);transform-origin:0 0;left:355.65px">01 Asus vivo Book</div>
<div class="t" id="t92" style="top:445.80px;font-size:15px;line-height:15px;font-weight:normal;color:#1b1b26;font-family:'Liberation Sans',sans-serif;z-index:5;transform:scaleX(1.0290);transform-origin:0 0;left:355.68px">1 4 Stainless Steel Comb</div>
<div class="t" id="t93" style="top:478.15px;font-size:15px;line-height:15px;font-weight:normal;color:#1b1b26;font-family:'Liberation Sans',sans-serif;z-index:5;transform:scaleX(1.0290);transform-origin:0 0;left:355.68px">1 4 Stainless Steel Comb</div>
<div class="t" id="t94" style="top:316.40px;font-size:15px;line-height:15px;font-weight:normal;color:#1b1b26;font-family:'Liberation Sans',sans-serif;z-index:5;transform:scaleX(1.0989);transform-origin:0 0;left:1231.50px">90.0000</div>
<div class="t" id="t95" style="top:348.75px;font-size:15px;line-height:15px;font-weight:normal;color:#1b1b26;font-family:'Liberation Sans',sans-serif;z-index:5;transform:scaleX(1.1218);transform-origin:0 0;left:1220.90px">700.0000</div>
<div class="t" id="t96" style="top:381.10px;font-size:15px;line-height:15px;font-weight:normal;color:#1b1b26;font-family:'Liberation Sans',sans-serif;z-index:5;transform:scaleX(1.0989);transform-origin:0 0;left:1231.50px">50.0000</div>
<div class="t" id="t97" style="top:413.45px;font-size:15px;line-height:15px;font-weight:normal;color:#1b1b26;font-family:'Liberation Sans',sans-serif;z-index:5;transform:scaleX(1.0989);transform-origin:0 0;left:1231.50px">40.0000</div>
<div class="t" id="t98" style="top:445.80px;font-size:15px;line-height:15px;font-weight:normal;color:#1b1b26;font-family:'Liberation Sans',sans-serif;z-index:5;transform:scaleX(1.1247);transform-origin:0 0;left:1212.60px">1100.0000</div>
<div class="t" id="t99" style="top:478.15px;font-size:15px;line-height:15px;font-weight:normal;color:#1b1b26;font-family:'Liberation Sans',sans-serif;z-index:5;transform:scaleX(1.1058);transform-origin:0 0;left:1221.90px">555.9300</div>
<div class="t" id="t100" style="top:316.40px;font-size:15px;line-height:15px;font-weight:normal;color:#1b1b26;font-family:'Liberation Sans',sans-serif;z-index:5;transform:scaleX(1.1179);transform-origin:0 0;left:1335.20px">0.0000</div>
<div class="t" id="t101" style="top:381.10px;font-size:15px;line-height:15px;font-weight:normal;color:#1b1b26;font-family:'Liberation Sans',sans-serif;z-index:5;transform:scaleX(1.1179);transform-origin:0 0;left:1335.20px">0.0000</div>
<div class="t" id="t102" style="top:316.40px;font-size:15px;line-height:15px;font-weight:normal;color:#1b1b26;font-family:'Liberation Sans',sans-serif;z-index:5;transform:scaleX(1.1266);transform-origin:0 0;left:1430.60px">0.0000</div>
<div class="t" id="t103" style="top:348.75px;font-size:15px;line-height:15px;font-weight:normal;color:#1b1b26;font-family:'Liberation Sans',sans-serif;z-index:5;transform:scaleX(1.1266);transform-origin:0 0;left:1430.60px">0.0000</div>
<div class="t" id="t104" style="top:381.10px;font-size:15px;line-height:15px;font-weight:normal;color:#1b1b26;font-family:'Liberation Sans',sans-serif;z-index:5;transform:scaleX(1.1266);transform-origin:0 0;left:1430.60px">0.0000</div>
<div class="t" id="t105" style="top:413.45px;font-size:15px;line-height:15px;font-weight:normal;color:#1b1b26;font-family:'Liberation Sans',sans-serif;z-index:5;transform:scaleX(1.1266);transform-origin:0 0;left:1430.60px">0.0000</div>
<div class="t" id="t106" style="top:445.80px;font-size:15px;line-height:15px;font-weight:normal;color:#1b1b26;font-family:'Liberation Sans',sans-serif;z-index:5;transform:scaleX(1.1266);transform-origin:0 0;left:1430.60px">0.0000</div>
<div class="t" id="t107" style="top:478.15px;font-size:15px;line-height:15px;font-weight:normal;color:#1b1b26;font-family:'Liberation Sans',sans-serif;z-index:5;transform:scaleX(1.1266);transform-origin:0 0;left:1430.60px">0.0000</div>
<div class="t" id="t108" style="top:862.59px;font-size:19.5px;line-height:19.5px;font-weight:bold;color:#111;font-family:'Liberation Sans',sans-serif;z-index:5;transform:scaleX(0.9370);transform-origin:0 0;left:75.25px">Remarks</div>
<div class="t" id="t109" style="top:862.59px;font-size:19.5px;line-height:19.5px;font-weight:bold;color:#111;font-family:'Liberation Sans',sans-serif;z-index:5;transform:scaleX(0.9406);transform-origin:0 0;left:833.55px">Message</div>
<div class="t" id="t110" style="top:932.66px;font-size:16px;line-height:16px;font-weight:bold;color:#111;font-family:'Liberation Sans',sans-serif;z-index:5;transform:scaleX(0.9728);transform-origin:0 0;left:104.32px">Total Qty</div>
<div class="t" id="t111" style="top:932.56px;font-size:16px;line-height:16px;font-weight:bold;color:#111;font-family:'Liberation Sans',sans-serif;z-index:5;transform:scaleX(1.0299);transform-origin:0 0;left:223.78px">12.000</div>
<div class="t" id="t112" style="top:932.66px;font-size:16px;line-height:16px;font-weight:bold;color:#111;font-family:'Liberation Sans',sans-serif;z-index:5;transform:scaleX(0.9628);transform-origin:0 0;left:381.93px">Total Weight</div>
<div class="t" id="t113" style="top:932.56px;font-size:16px;line-height:16px;font-weight:bold;color:#111;font-family:'Liberation Sans',sans-serif;z-index:5;transform:scaleX(1.0488);transform-origin:0 0;left:529.66px">0.000</div>
<div class="t" id="t114" style="top:932.16px;font-size:18px;line-height:18px;font-weight:bold;color:#111;font-family:'Liberation Sans',sans-serif;z-index:5;transform:scaleX(0.9764);transform-origin:0 0;left:1018.62px">Delivery Type</div>
<div class="t" id="t115" style="top:927.00px;font-size:28px;line-height:28px;font-weight:bold;color:#111;font-family:'Liberation Sans',sans-serif;z-index:5;transform:scaleX(0.9491);transform-origin:0 0;left:1608.54px">Total : INR.5493.0000</div>
<div class="t" id="t116" style="top:983.96px;font-size:16px;line-height:16px;font-weight:bold;color:#111;font-family:'Liberation Sans',sans-serif;z-index:5;transform:scaleX(0.9613);transform-origin:0 0;left:478.78px">F2 Hold</div>
<div class="t" id="t117" style="top:983.96px;font-size:16px;line-height:16px;font-weight:bold;color:#111;font-family:'Liberation Sans',sans-serif;z-index:5;transform:scaleX(0.9944);transform-origin:0 0;left:627.25px">F3 New</div>
<div class="t" id="t118" style="top:983.96px;font-size:16px;line-height:16px;font-weight:bold;color:#111;font-family:'Liberation Sans',sans-serif;z-index:5;transform:scaleX(0.9561);transform-origin:0 0;left:777.24px">F4 Edit</div>
<div class="t" id="t119" style="top:983.96px;font-size:16px;line-height:16px;font-weight:bold;color:#111;font-family:'Liberation Sans',sans-serif;z-index:5;transform:scaleX(0.9308);transform-origin:0 0;left:917.56px">F5 Recall</div>
<div class="t" id="t120" style="top:983.96px;font-size:16px;line-height:16px;font-weight:bold;color:#111;font-family:'Liberation Sans',sans-serif;z-index:5;transform:scaleX(0.9275);transform-origin:0 0;left:1069.71px">F6 Save</div>
<div class="t" id="t121" style="top:983.96px;font-size:16px;line-height:16px;font-weight:bold;color:#111;font-family:'Liberation Sans',sans-serif;z-index:5;transform:scaleX(0.9916);transform-origin:0 0;left:1215.71px">F7 View</div>
<div class="t" id="t122" style="top:983.96px;font-size:16px;line-height:16px;font-weight:bold;color:#111;font-family:'Liberation Sans',sans-serif;z-index:5;transform:scaleX(0.9704);transform-origin:0 0;left:1363.67px">F8 Print</div>
<div class="t" id="t123" style="top:983.96px;font-size:16px;line-height:16px;font-weight:bold;color:#111;font-family:'Liberation Sans',sans-serif;z-index:5;transform:scaleX(0.9629);transform-origin:0 0;left:1509.68px">F9 Clear</div>
<div class="t" id="t124" style="top:983.96px;font-size:16px;line-height:16px;font-weight:bold;color:#111;font-family:'Liberation Sans',sans-serif;z-index:5;transform:scaleX(0.9458);transform-origin:0 0;left:1651.94px">F10 Close</div>
<div class="t" id="t125" style="top:983.96px;font-size:16px;line-height:16px;font-weight:bold;color:#111;font-family:'Liberation Sans',sans-serif;z-index:5;transform:scaleX(0.9611);transform-origin:0 0;left:1781.48px">F11 Buy XCare</div>
</body></html>
